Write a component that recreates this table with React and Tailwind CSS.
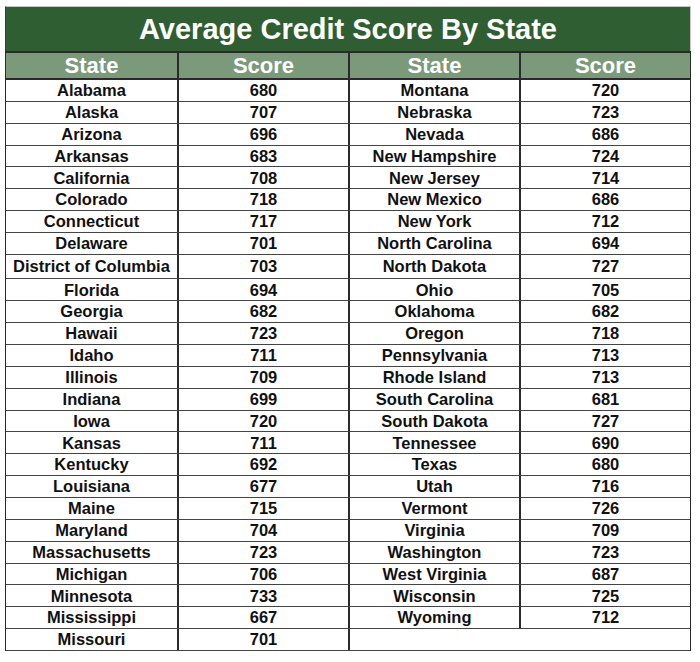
import React from "react";

const left = [
  ["Alabama", 680], ["Alaska", 707], ["Arizona", 696], ["Arkansas", 683], ["California", 708],
  ["Colorado", 718], ["Connecticut", 717], ["Delaware", 701], ["District of Columbia", 703],
  ["Florida", 694], ["Georgia", 682], ["Hawaii", 723], ["Idaho", 711], ["Illinois", 709],
  ["Indiana", 699], ["Iowa", 720], ["Kansas", 711], ["Kentucky", 692], ["Louisiana", 677],
  ["Maine", 715], ["Maryland", 704], ["Massachusetts", 723], ["Michigan", 706],
  ["Minnesota", 733], ["Mississippi", 667], ["Missouri", 701],
];
const right = [
  ["Montana", 720], ["Nebraska", 723], ["Nevada", 686], ["New Hampshire", 724], ["New Jersey", 714],
  ["New Mexico", 686], ["New York", 712], ["North Carolina", 694], ["North Dakota", 727],
  ["Ohio", 705], ["Oklahoma", 682], ["Oregon", 718], ["Pennsylvania", 713], ["Rhode Island", 713],
  ["South Carolina", 681], ["South Dakota", 727], ["Tennessee", 690], ["Texas", 680], ["Utah", 716],
  ["Vermont", 726], ["Virginia", 709], ["Washington", 723], ["West Virginia", 687],
  ["Wisconsin", 725], ["Wyoming", 712],
];

const font = { fontFamily: '"Liberation Sans", Arial, sans-serif' };

export default function App() {
  return (
    <div className="w-[700px] h-[662px] bg-white pl-[5px] pt-[6px]" style={font}>
      <div className="w-[686px]">
        <div className="h-[45px] bg-[#2f5e32] border-t border-r border-[#c8c8c8] border-l-[#3a3a3a] border-l flex items-center justify-center">
          <span className="text-white font-bold text-[29px] leading-none">Average Credit Score By State</span>
        </div>
        <div className="border-l border-r border-[#2a2a2a]">
          <div className="grid grid-cols-4 h-[29px] bg-[#7b9a79] border-t-2 border-b-2 border-[#2a2a2a]">
            {["State", "Score", "State", "Score"].map((t, i) => (
              <div
                key={i}
                className={
                  "flex items-center justify-center text-white font-bold text-[22px] leading-none " +
                  (i > 0 ? "border-l-2 border-[#2a2a2a]" : "")
                }
              >
                {t}
              </div>
            ))}
          </div>
          {left.map((l, i) => {
            const r = right[i];
            return (
              <div
                key={i}
                className={
                  "grid grid-cols-4 border-b border-[#444] text-[#111] font-bold text-[16.5px] leading-none " +
                  (i === 8 ? "h-[24.5px]" : "h-[21.87px]")
                }
              >
                <div className="flex items-center justify-center whitespace-nowrap">{l[0]}</div>
                <div className="flex items-center justify-center border-l-2 border-[#2a2a2a]">{l[1]}</div>
                {r ? (
                  <>
                    <div className="flex items-center justify-center border-l-2 border-[#2a2a2a] whitespace-nowrap">{r[0]}</div>
                    <div className="flex items-center justify-center border-l-2 border-[#2a2a2a]">{r[1]}</div>
                  </>
                ) : (
                  <div className="col-span-2 border-l-2 border-[#2a2a2a]"></div>
                )}
              </div>
            );
          })}
        </div>
      </div>
    </div>
  );
}
